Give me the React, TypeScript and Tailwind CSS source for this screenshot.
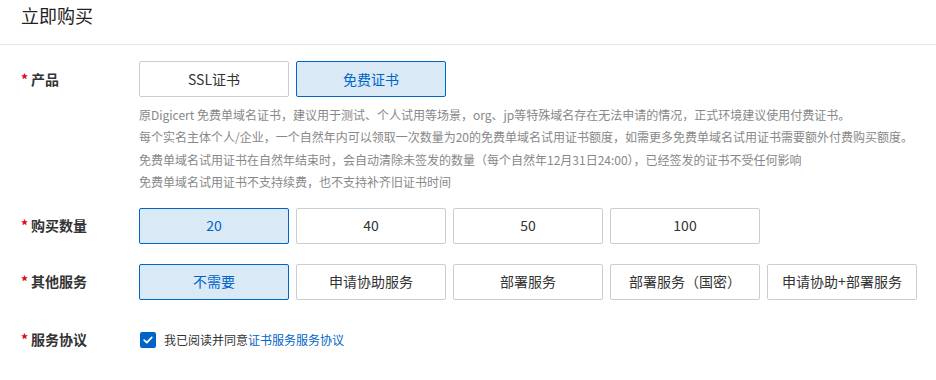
import React from "react";

const font = { fontFamily: '"Noto Sans CJK SC", "Noto Sans", sans-serif' };

function Opt({ label, selected }: { label: string; selected?: boolean }) {
  return (
    <div
      className={
        "flex h-[36px] w-[150px] items-center justify-center border text-[14px] " +
        (selected
          ? "border-[#0064c8] bg-[#d9e9f6] text-[#0064c8] rounded-[2px]"
          : "border-[#c9cdd4] bg-white text-[#333] rounded-[2px]")
      }
    >
      {label}
    </div>
  );
}

function Label({ text }: { text: string }) {
  return (
    <div className="flex w-[139px] shrink-0 items-center pl-[21px] text-[14px] font-bold text-[#333]">
      <span className="mr-[3px] text-[#e0001b]">*</span>
      {text}
    </div>
  );
}

export default function App() {
  return (
    <div className="h-[380px] w-[936px] bg-white" style={font}>
      <div className="flex h-[45px] items-start border-b border-[#e5e5e5] pl-[21px] pt-[2px] text-[18px] text-[#222]">
        立即购买
      </div>
      <div className="mt-[16px] flex">
        <div className="flex h-[36px] items-center">
          <Label text="产品" />
        </div>
        <div className="flex flex-col">
          <div className="flex gap-[7px]">
            <Opt label="SSL证书" />
            <Opt label="免费证书" selected />
          </div>
          <div className="mt-[7px] text-[12px] leading-[22.4px] text-[#888]">
            <div>原Digicert 免费单域名证书，建议用于测试、个人试用等场景，org、jp等特殊域名存在无法申请的情况，正式环境建议使用付费证书。</div>
            <div>每个实名主体个人/企业，一个自然年内可以领取一次数量为20的免费单域名试用证书额度，如需更多免费单域名试用证书需要额外付费购买额度。</div>
            <div>免费单域名试用证书在自然年结束时，会自动清除未签发的数量（每个自然年12月31日24:00），已经签发的证书不受任何影响</div>
            <div>免费单域名试用证书不支持续费，也不支持补齐旧证书时间</div>
          </div>
        </div>
      </div>
      <div className="mt-[14px] flex">
        <Label text="购买数量" />
        <div className="flex gap-[7px]">
          <Opt label="20" selected />
          <Opt label="40" />
          <Opt label="50" />
          <Opt label="100" />
        </div>
      </div>
      <div className="mt-[20px] flex">
        <Label text="其他服务" />
        <div className="flex gap-[7px]">
          <Opt label="不需要" selected />
          <Opt label="申请协助服务" />
          <Opt label="部署服务" />
          <Opt label="部署服务（国密）" />
          <Opt label="申请协助+部署服务" />
        </div>
      </div>
      <div className="mt-[30px] flex h-[20px] items-center">
        <Label text="服务协议" />
        <div className="flex items-center text-[12px]">
          <div className="ml-[1px] flex h-[16px] w-[16px] items-center justify-center rounded-[2px] bg-[#0064c8]">
            <svg width="12" height="12" viewBox="0 0 12 12" fill="none">
              <path d="M2.2 6.2 L4.8 8.6 L9.8 3.4" stroke="white" strokeWidth="1.8" strokeLinecap="round" strokeLinejoin="round" />
            </svg>
          </div>
          <span className="ml-[8px] text-[#333]">我已阅读并同意</span>
          <span className="text-[#0064c8]">证书服务服务协议</span>
        </div>
      </div>
    </div>
  );
}
